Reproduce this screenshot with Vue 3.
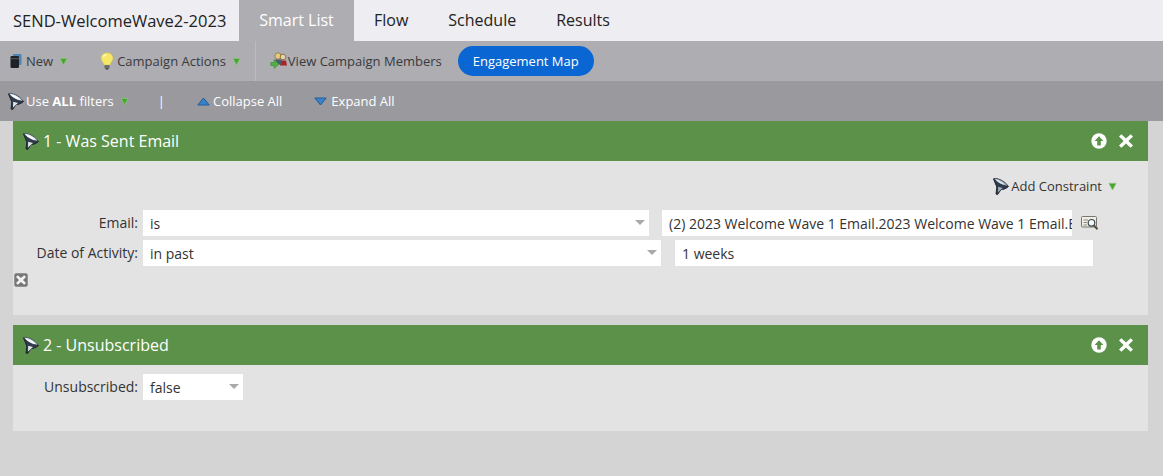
<script setup>
const tabs = [
  { label: 'Smart List', active: true },
  { label: 'Flow' },
  { label: 'Schedule' },
  { label: 'Results' },
]
</script>

<template>
  <div class="page">
    <svg width="0" height="0" class="defs">
      <defs>
        <symbol id="funnel" viewBox="0 0 18 18">
          <path d="M1.5 2 L16.5 9.5 C14 11.8 11 12.6 9 12.6 L5.6 17.6 L4 17 L4.8 10 Z" fill="#2f3b4c" stroke="#1a212b" stroke-width=".9" stroke-linejoin="round"/>
          <path d="M1.8 1.6 C5 .4 13 4 16 9 C13 9.6 5.4 7 1.8 1.6 Z" fill="#8fa0b4" stroke="#262f3b" stroke-width=".7"/>
          <path d="M3.6 2.4 C6 2.2 11 5 13.2 7.8 C10.4 7.4 6 5.4 3.6 2.4 Z" fill="#e4e9ee"/>
          <path d="M6.2 9.8 L10.8 11 L6 15.2 Z" fill="#9fadbe"/>
        </symbol>
        <symbol id="funnel-light" viewBox="0 0 18 18">
          <path d="M1.5 2 L16.5 9.5 C14 11.8 11 12.6 9 12.6 L5.6 17.6 L4 17 L4.8 10 Z" fill="#2f3b4c" stroke="#1a212b" stroke-width=".9" stroke-linejoin="round"/>
          <path d="M1.8 1.6 C5 .4 13 4 16 9 C13 9.6 5.4 7 1.8 1.6 Z" fill="#c8d2dd" stroke="#2a3442" stroke-width=".7"/>
          <path d="M3.4 2.2 C6 2 11.4 5 13.6 8 C10.4 7.6 5.8 5.4 3.4 2.2 Z" fill="#fbfcfd"/>
          <path d="M6.2 9.8 L11 11 L6 15.4 Z" fill="#dfe5ec"/>
        </symbol>
        <symbol id="tri" viewBox="0 0 9 9">
          <path d="M1 1.4 H8 L4.5 8 Z" fill="#45a52f" stroke="#86c276" stroke-width=".9" stroke-linejoin="round"/>
        </symbol>
        <symbol id="up" viewBox="0 0 16 16">
          <circle cx="8" cy="8" r="7.7" fill="#fff"/>
          <path d="M8 3.2 L12.4 8 H9.8 V12.4 H6.2 V8 H3.6 Z" fill="#5c9149"/>
        </symbol>
        <symbol id="close" viewBox="0 0 16 16">
          <path d="M3.4 1.2 L8 5.6 L12.6 1.2 L15 3.6 L10.4 8 L15 12.4 L12.6 14.8 L8 10.4 L3.4 14.8 L1 12.4 L5.6 8 L1 3.6 Z" fill="#fff"/>
        </symbol>
      </defs>
    </svg>

    <header class="tabbar">
      <div class="title">SEND-WelcomeWave2-2023</div>
      <div v-for="t in tabs" :key="t.label" class="tab" :class="{ active: t.active }">{{ t.label }}</div>
    </header>

    <div class="toolbar">
      <div class="tool tool-new">
        <svg class="ico" width="14" height="16" viewBox="0 0 14 16">
          <rect x="4" y="1" width="8.5" height="11" rx="1" fill="#4c86b8"/>
          <rect x="1.5" y="3" width="8.5" height="12" rx="1.2" fill="#1f2226"/>
          <rect x="1.5" y="5.2" width="8.5" height="1" fill="#555a60"/>
        </svg>
        <span>New</span>
        <svg class="tri" width="9" height="9"><use href="#tri" /></svg>
      </div>
      <div class="tool tool-actions">
        <svg class="ico" width="14" height="18" viewBox="0 0 14 18">
          <path d="M7 .8 C3.4 .8 1 3.3 1 6.3 C1 9 3.3 10.2 4 13 H10 C10.7 10.2 13 9 13 6.3 C13 3.3 10.6 .8 7 .8 Z" fill="#f6e66a" stroke="#cfc04a" stroke-width=".5"/>
          <path d="M3.4 5 C3.8 3.6 5 2.8 6.4 2.6" stroke="#fffbd0" stroke-width="1.2" fill="none"/>
          <rect x="4.4" y="13" width="5.2" height="3.4" rx=".8" fill="#6d6e70"/>
          <rect x="5.6" y="16.2" width="2.8" height="1.3" fill="#3e3f41"/>
        </svg>
        <span>Campaign Actions</span>
        <svg class="tri" width="9" height="9"><use href="#tri" /></svg>
      </div>
      <div class="sep"></div>
      <div class="tool tool-members">
        <svg class="ico" width="18" height="18" viewBox="0 0 18 18">
          <circle cx="8" cy="4" r="3.2" fill="#e8c77a" stroke="#6d5a2c" stroke-width=".6"/>
          <circle cx="13" cy="5" r="2.8" fill="#e8d7a4" stroke="#5e3d20" stroke-width=".6"/>
          <path d="M10.5 8.5 H16 L17 13.5 H10 Z" fill="#a8242a"/>
          <path d="M5.5 7.5 H11 L12 12.5 H5 Z" fill="#4a5a70"/>
          <path d="M.8 10.5 H4.2 V7.5 L9 12 L4.2 16.5 V13.5 H.8 Z" fill="#4fb243" stroke="#2a7a2a" stroke-width=".5"/>
        </svg>
        <span>View Campaign Members</span>
      </div>
      <div class="pill">Engagement Map</div>
    </div>

    <div class="filterbar">
      <svg class="fb-funnel" width="18" height="18"><use href="#funnel-light" /></svg>
      <span class="fb-use">Use <b>ALL</b> filters</span>
      <svg class="tri fb-tri" width="9" height="9"><use href="#tri" /></svg>
      <span class="fb-pipe">|</span>
      <svg class="fb-arrow" width="13" height="9" viewBox="0 0 13 9"><path d="M6.5 1 L12.2 8 H.8 Z" fill="#3a82c8" stroke="#1f5c9c" stroke-width="1" stroke-linejoin="round"/></svg>
      <span class="fb-collapse">Collapse All</span>
      <svg class="fb-arrow fb-arrow2" width="13" height="9" viewBox="0 0 13 9"><path d="M.8 1 H12.2 L6.5 8 Z" fill="#3a82c8" stroke="#1f5c9c" stroke-width="1" stroke-linejoin="round"/></svg>
      <span>Expand All</span>
    </div>

    <main class="content">
      <section class="panel">
        <div class="head">
          <svg width="18" height="18"><use href="#funnel-light" /></svg>
          <span class="head-title">1 - Was Sent Email</span>
          <svg class="h-up" width="16" height="16"><use href="#up" /></svg>
          <svg class="h-x" width="16" height="16"><use href="#close" /></svg>
        </div>
        <div class="body">
          <div class="constraint">
            <svg width="18" height="18"><use href="#funnel" /></svg>
            <span>Add Constraint</span>
            <svg class="tri" width="9" height="9"><use href="#tri" /></svg>
          </div>
          <div class="row row-email">
            <label class="lbl">Email:</label>
            <div class="field sel w-is">is<i class="caret"></i></div>
            <div class="field w-email">(2) 2023 Welcome Wave 1 Email.2023 Welcome Wave 1 Email.Email Send</div>
            <svg class="lookup" width="18" height="16" viewBox="0 0 18 16">
              <rect x=".5" y="1.5" width="15" height="10.5" rx="1" fill="#efede6" stroke="#77766f"/>
              <path d="M2.5 5 H7 M2.5 7.5 H6 M2.5 10 H6" stroke="#8b8b88" />
              <circle cx="10.5" cy="7.8" r="3.3" fill="#f7f8f4" stroke="#3d4a50" stroke-width="1.2"/>
              <path d="M13 10.4 L16.5 14.2" stroke="#54503c" stroke-width="2"/>
            </svg>
          </div>
          <div class="row">
            <label class="lbl">Date of Activity:</label>
            <div class="field sel w-past">in past<i class="caret"></i></div>
            <div class="field w-weeks">1 weeks</div>
          </div>
          <svg class="remove" width="14" height="14" viewBox="0 0 14 14">
            <rect x=".3" y=".3" width="13.4" height="13.4" rx="2" fill="#777"/>
            <path d="M3.8 2.2 L7 5 L10.2 2.2 L12 4 L9 7 L12 10 L10.2 11.8 L7 9 L3.8 11.8 L2 10 L5 7 L2 4 Z" fill="#f2f2f2"/>
          </svg>
        </div>
      </section>

      <section class="panel">
        <div class="head">
          <svg width="18" height="18"><use href="#funnel-light" /></svg>
          <span class="head-title">2 - Unsubscribed</span>
          <svg class="h-up" width="16" height="16"><use href="#up" /></svg>
          <svg class="h-x" width="16" height="16"><use href="#close" /></svg>
        </div>
        <div class="body body-two">
          <div class="row">
            <label class="lbl">Unsubscribed:</label>
            <div class="field sel w-false">false<i class="caret"></i></div>
          </div>
        </div>
      </section>
    </main>
  </div>
</template>

<style>
html, body { margin: 0; background: #d4d4d4; }
</style>

<style scoped>
.page {
  width: 1163px;
  height: 476px;
  overflow: hidden;
  background: #d4d4d4;
  font-family: "Open Sans", "Noto Sans", sans-serif;
  font-size: 13px;
  color: #333;
  display: flex;
  flex-direction: column;
}
.defs { position: absolute; }
.tabbar {
  height: 41px;
  flex: none;
  background: #ededf2;
  display: flex;
  align-items: center;
  font-size: 16px;
  color: #222;
}
.title { width: 239px; padding-left: 13px; box-sizing: border-box; white-space: nowrap; font-size: 16.5px; }
.tab { height: 41px; line-height: 41px; }
.tab:nth-child(3) { margin-left: 20px; }
.tab:nth-child(4) { margin-left: 40px; }
.tab:nth-child(5) { margin-left: 40px; }
.tab.active {
  width: 115px;
  text-align: center;
  background: #adadb2;
  color: #fff;
}
.toolbar {
  height: 40px;
  flex: none;
  background: #adadb2;
  display: flex;
  align-items: center;
  color: #3a3a3d;
}
.tool { display: flex; align-items: center; }
.tool-new { padding-left: 9px; }
.tool-new span { margin-left: 3px; }
.tool-new .tri { margin-left: 6px; }
.tool-actions { margin-left: 32px; }
.tool-actions span { margin-left: 3px; }
.tool-actions .tri { margin-left: 6px; }
.sep { width: 1px; height: 40px; background: #bcbcc0; margin-left: 14px; }
.tool-members { margin-left: 14px; }
.ico { flex: none; }
.tri { flex: none; display: block; }
.pill {
  margin-left: 16px;
  width: 136px;
  height: 30px;
  line-height: 30px;
  border-radius: 15px;
  background: #0a66d2;
  color: #fff;
  text-align: center;
}
.filterbar {
  height: 40px;
  flex: none;
  background: #99999e;
  display: flex;
  align-items: center;
  color: #fff;
  padding-left: 7px;
}
.fb-funnel { flex: none; }
.fb-use { margin-left: 1px; }
.fb-tri { margin-left: 6px; }
.fb-pipe { margin-left: 29px; }
.fb-arrow { margin-left: 32px; flex: none; margin-right: 3px; }
.fb-arrow2 { margin-left: 32px; margin-right: 4px; }
.content {
  flex: 1;
  padding: 0 15px 0 13px;
  display: flex;
  flex-direction: column;
  gap: 10px;
}
.head {
  height: 40px;
  background: #5c9149;
  display: flex;
  align-items: center;
  color: #fff;
  padding: 0 14px 0 9px;
}
.head-title { font-size: 16px; margin-left: 3px; flex: 1; }
.h-up { margin-right: 11px; }
.body {
  background: #e3e3e3;
  height: 154px;
  box-sizing: border-box;
  color: #333;
}
.constraint {
  display: flex;
  align-items: center;
  justify-content: flex-end;
  height: 49px;
  padding-right: 31px;
  padding-top: 1px;
  box-sizing: border-box;
}
.constraint span { margin: 0 6px 0 1px; }
.row { display: flex; align-items: center; height: 26px; font-size: 14px; }
.row-email { margin-bottom: 4px; }
.lbl { width: 125px; text-align: right; white-space: nowrap; padding-bottom: 2px; }
.field {
  height: 26px;
  line-height: 28px;
  background: #fff;
  box-sizing: border-box;
  padding-left: 7px;
  position: relative;
  color: #333;
  flex: none;
}
.sel { margin-left: 5px; }
.caret {
  position: absolute;
  right: 4px;
  top: 10px;
  width: 0;
  height: 0;
  border-left: 5px solid transparent;
  border-right: 5px solid transparent;
  border-top: 5px solid #a9a9a9;
}
.w-is { width: 506px; }
.w-past { width: 518px; }
.w-false { width: 100px; }
.w-email { width: 410px; margin-left: 13px; overflow: hidden; white-space: nowrap; }
.w-weeks { width: 418px; margin-left: 14px; }
.lookup { margin-left: 9px; flex: none; }
.remove { display: block; margin: 7px 0 0 1px; }
.body-two { height: 66px; padding-top: 9px; }
</style>
